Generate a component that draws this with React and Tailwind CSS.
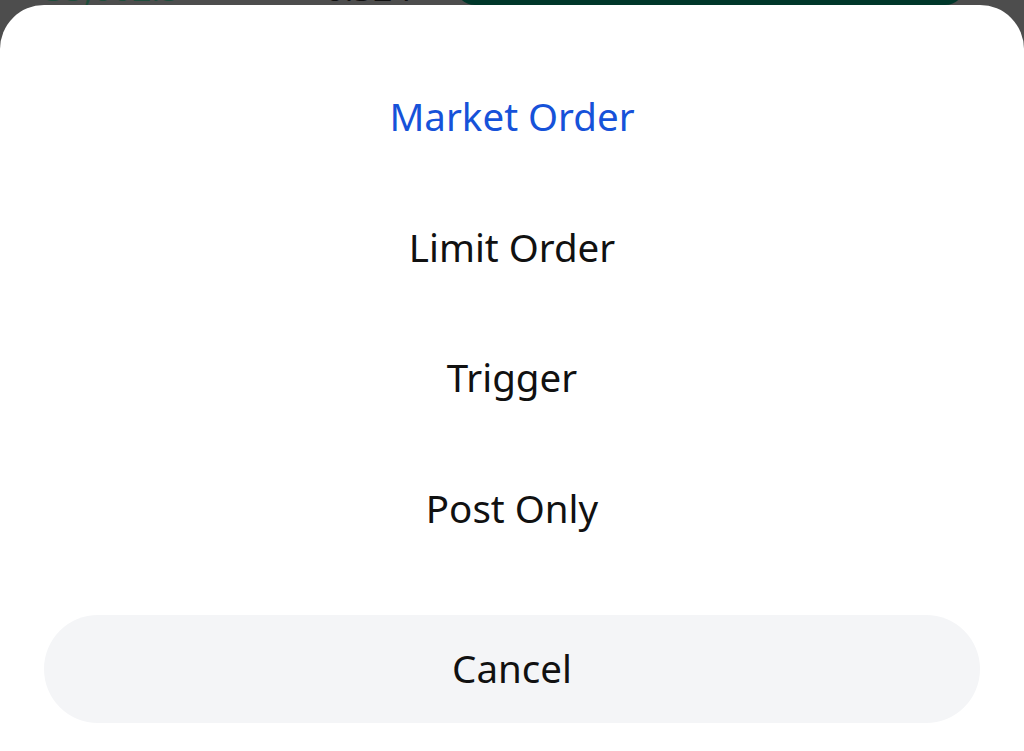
import React from "react";

const options = [
  { label: "Market Order", active: true },
  { label: "Limit Order" },
  { label: "Trigger" },
  { label: "Post Only" },
];

export default function App() {
  return (
    <div className="relative h-[751px] w-[1024px] overflow-hidden bg-[#4d4d4d] font-['Noto_Sans',sans-serif]">
      {/* dimmed page behind the sheet */}
      <div className="flex h-[5px] items-end">
        <div className="ml-[45px] w-[120px] text-[34px] leading-none text-[#1f4d3c]">35,002.5</div>
        <div className="ml-[160px] w-[90px] text-[34px] leading-none text-[#111]">0.324</div>
        <div className="ml-[40px] h-[40px] w-[510px] rounded-b-[20px] bg-[#00372a]" />
      </div>

      <div className="flex h-[746px] flex-col rounded-t-[44px] bg-white">
        <div className="flex flex-col pt-[47px]">
          {options.map((o) => (
            <div
              key={o.label}
              className={`flex h-[130.5px] items-center justify-center text-[38.5px] ${
                o.active ? "text-[#1652d9]" : "text-[#111]"
              }`}
            >
              {o.label}
            </div>
          ))}
        </div>
        <div className="mx-[44px] mt-[41px] flex h-[108px] items-center justify-center rounded-full bg-[#f4f5f7] text-[38.5px] text-[#111]">
          Cancel
        </div>
      </div>
    </div>
  );
}
